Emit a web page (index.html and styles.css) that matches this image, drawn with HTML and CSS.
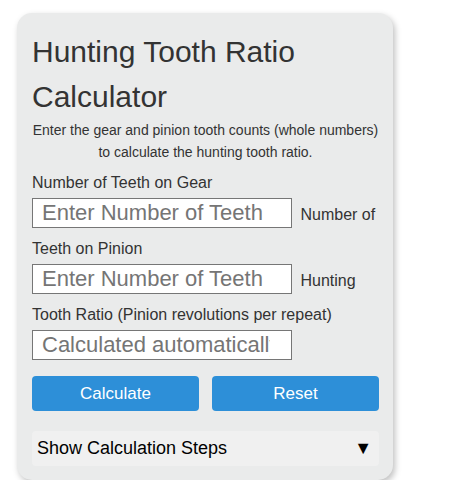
FILE: index.html
```html
<!DOCTYPE html>
<html lang="en">
<head>
    <meta charset="UTF-8">
    <meta name="viewport" content="width=device-width, initial-scale=1.0">
    <title>Hunting Tooth Ratio Calculator</title>
    <link rel="stylesheet" href="styles.css">
</head>
<body>
    <div class="calculator">
        <h1>Hunting Tooth Ratio Calculator</h1>
        <p class="intro">Enter the gear and pinion tooth counts (whole numbers) to calculate the hunting tooth ratio.</p>

        <div class="fields">
            <label for="gearTeeth">Number of Teeth on Gear</label>
            <input type="number" id="gearTeeth" placeholder="Enter Number of Teeth">
            <label for="pinionTeeth">Number of Teeth on Pinion</label>
            <input type="number" id="pinionTeeth" placeholder="Enter Number of Teeth">
            <label for="ratio">Hunting Tooth Ratio (Pinion revolutions per repeat)</label>
            <input type="text" id="ratio" placeholder="Calculated automatically" readonly>
        </div>

        <div class="buttons">
            <button>Calculate</button>
            <button>Reset</button>
        </div>

        <details class="steps">
            <summary><span>Show Calculation Steps</span><span class="arrow">▼</span></summary>
        </details>
    </div>
</body>
</html>
```

FILE: styles.css
```css
body {
    margin: 0;
    font-family: 'Liberation Sans', Arial, sans-serif;
    background: #fff;
}

.calculator {
    width: 347px;
    margin: 13px 0 0 17px;
    padding: 16px 14px 14px 15px;
    background: #eaebeb;
    border-radius: 15px;
    box-shadow: 2px 3px 6px rgba(0,0,0,0.25);
    color: #333;
}

h1 {
    margin: 0;
    font-size: 30px;
    font-weight: normal;
    line-height: 45px;
}

.intro {
    margin: 0;
    text-align: center;
    font-size: 14px;
    line-height: 22px;
}

.fields {
    margin-top: 8px;
    font-size: 16px;
    line-height: 24px;
}

.fields input {
    width: 260px;
    height: 30px;
    box-sizing: border-box;
    margin: 3px 4px 9px 0;
    padding: 0 21px 0 9px;
    border: 1px solid #767676;
    font-family: 'Liberation Sans', Arial, sans-serif;
    font-size: 22px;
    background: #fff;
    color: #333;
}

.fields input::placeholder {
    color: #757575;
}

.fields input::-webkit-inner-spin-button,
.fields input::-webkit-outer-spin-button {
    -webkit-appearance: none;
    margin: 0;
}

.buttons {
    display: flex;
    gap: 13px;
    margin-top: 7px;
}

.buttons button {
    flex: 1;
    height: 35px;
    border: none;
    border-radius: 4px;
    background: #2d8fd8;
    color: #fff;
    font-family: inherit;
    font-size: 17px;
    cursor: pointer;
}

.steps {
    margin-top: 20px;
    background: #f0f0f0;
    border-radius: 4px;
}

.steps summary {
    display: flex;
    justify-content: space-between;
    align-items: center;
    height: 35px;
    padding: 0 7px 0 5px;
    list-style: none;
    font-size: 18px;
    color: #000;
    cursor: pointer;
}

.steps summary::-webkit-details-marker {
    display: none;
}
```
